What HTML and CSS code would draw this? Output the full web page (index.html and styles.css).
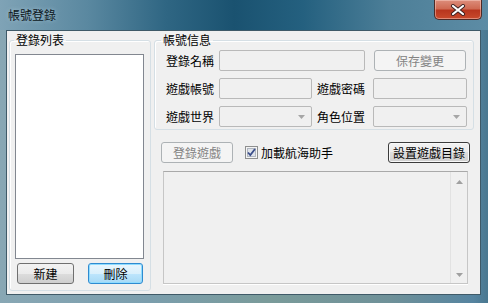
FILE: index.html
```html
<!DOCTYPE html>
<html lang="zh-Hant">
<head>
  <meta charset="UTF-8" />
  <title>帳號登錄</title>
  <link rel="stylesheet" href="styles.css">
</head>
<body>
  <div class="window">
    <div class="titlebar">
      <span class="title">帳號登錄</span>
      <div class="close">
        <svg width="16" height="12" viewBox="0 0 16 12">
          <path d="M3 2 L13 10 M13 2 L3 10" stroke="#3a2020" stroke-width="4" stroke-linecap="round"/>
          <path d="M3 2 L13 10 M13 2 L3 10" stroke="#fff" stroke-width="2.2" stroke-linecap="round"/>
        </svg>
      </div>
    </div>

    <div class="client">
      <fieldset class="group group-list">
        <legend>登錄列表</legend>
        <div class="list-body">
          <div class="listbox"></div>
          <div class="list-buttons">
            <button class="btn btn-new">新建</button>
            <button class="btn btn-hot btn-del">刪除</button>
          </div>
        </div>
      </fieldset>

      <div class="right">
        <fieldset class="group">
          <legend class="legend-info">帳號信息</legend>
          <div class="info-body">
            <div class="row">
              <span class="label">登錄名稱</span>
              <div class="field field-name"></div>
              <button class="btn btn-disabled btn-save">保存變更</button>
            </div>
            <div class="row">
              <span class="label">遊戲帳號</span>
              <div class="field field-small"></div>
              <span class="label label2">遊戲密碼</span>
              <div class="field field-small2"></div>
            </div>
            <div class="row">
              <span class="label">遊戲世界</span>
              <div class="field field-small combo">
                <svg width="7" height="4" viewBox="0 0 7 4"><path d="M0 0 H7 L3.5 4 Z" fill="#a6a6a6"/></svg>
              </div>
              <span class="label label2">角色位置</span>
              <div class="field field-small2 combo">
                <svg width="7" height="4" viewBox="0 0 7 4"><path d="M0 0 H7 L3.5 4 Z" fill="#a6a6a6"/></svg>
              </div>
            </div>
          </div>
        </fieldset>

        <div class="actions">
          <button class="btn btn-disabled btn-login">登錄遊戲</button>
          <label class="check">
            <svg width="13" height="13" viewBox="0 0 13 13">
              <rect x="0.5" y="0.5" width="12" height="12" fill="#f4f4f4" stroke="#8e8f8f"/>
              <rect x="2.5" y="2.5" width="8" height="8" fill="#dfe3ea" stroke="#b0b6c0"/>
              <path d="M3 6.5 L5.3 9 L10 3" fill="none" stroke="#3b4e8a" stroke-width="1.8"/>
            </svg>
            <span>加載航海助手</span>
          </label>
          <button class="btn btn-dark btn-dir">設置遊戲目錄</button>
        </div>

        <div class="output">
          <div class="output-text"></div>
          <div class="scrollbar">
            <svg width="7" height="4" viewBox="0 0 7 4"><path d="M0 4 H7 L3.5 0 Z" fill="#a0a0a0"/></svg>
            <svg width="7" height="4" viewBox="0 0 7 4"><path d="M0 0 H7 L3.5 4 Z" fill="#a0a0a0"/></svg>
          </div>
        </div>
      </div>
    </div>
  </div>
</body>
</html>
```

FILE: styles.css
```css
body {
  margin: 0;
  font-family: "Noto Sans CJK TC", "Noto Sans CJK SC", sans-serif;
  font-size: 12px;
  color: #000;
  background: #5d8aa0;
}
.window {
  width: 488px;
  height: 303px;
  display: flex;
  flex-direction: column;
  background: linear-gradient(90deg, #88a7b4 0%, #7b9ead 30%, #7a9b9a 55%, #6f9199 80%, #5684a0 97%, #4a7890 100%);
}
.titlebar {
  height: 30px;
  display: flex;
  align-items: flex-start;
  background: linear-gradient(90deg, #7fa3b6 0%, #5a88a0 18%, #2f6683 34%, #1a5270 48%, #24607f 62%, #4d7f98 80%, #5d8ca5 100%);
}
.title {
  margin: 8px 0 0 8px;
  line-height: 14px;
  color: #0c1620;
  text-shadow: 0 0 4px rgba(190,215,230,0.7);
}
.close {
  margin-left: auto;
  margin-right: 6px;
  width: 48px;
  height: 20px;
  box-sizing: border-box;
  border: 1px solid #4e2a26;
  border-top: none;
  border-radius: 0 0 5px 5px;
  background: linear-gradient(#dc8d7b 0%, #cf6a53 45%, #b8361e 55%, #c84a2c 100%);
  box-shadow: inset 0 0 0 1px rgba(255,220,210,0.45);
  display: flex;
  align-items: center;
  justify-content: center;
}
.client {
  margin: 0 7px 0 6px;
  height: 265px;
  box-sizing: border-box;
  border: 1px solid #3f5a68;
  background: #f0f0f0;
  display: flex;
  gap: 3px;
  padding: 2px 6px 3px 2px;
}
.group {
  margin: 0;
  padding: 0;
  min-width: 0;
  border: 1px solid #d5dfe5;
  border-radius: 3px;
  box-shadow: inset 1px 1px 0 #fff;
}
.group legend {
  padding: 0 2px;
  margin-left: 4px;
  line-height: 14px;
}
.group-list {
  width: 142px;
  box-sizing: border-box;
  flex: none;
}
.list-body {
  padding: 7px 6px 6px 5px;
}
.listbox {
  height: 205px;
  box-sizing: border-box;
  border: 1px solid #828790;
  background: #fff;
}
.list-buttons {
  display: flex;
  justify-content: space-between;
  margin-top: 4px;
  padding: 0 1px 0 2px;
}
.btn {
  height: 21px;
  box-sizing: border-box;
  padding: 0;
  border: 1px solid #707070;
  border-radius: 3px;
  background: linear-gradient(#f2f2f2 0%, #ebebeb 50%, #dddddd 50%, #cfcfcf 100%);
  font-family: inherit;
  font-size: 12px;
  line-height: 17px;
  color: #000;
}
.btn-new { width: 57px; }
.btn-del { width: 55px; }
.btn-hot {
  border-color: #2f8bd0;
  background: linear-gradient(#eaf6fd 0%, #d9f0fc 50%, #bee6fd 50%, #a7d9f5 100%);
  box-shadow: inset 0 0 0 1px #8fdcff;
}
.btn-disabled {
  border-color: #adb2b5;
  background: #f4f4f4;
  color: #838383;
}
.btn-dark {
  border-color: #3c3c3c;
  box-shadow: inset 0 0 0 1px #f8f8f8;
}
.right {
  width: 320px;
  display: flex;
  flex-direction: column;
}
.legend-info {
  margin-left: 6px !important;
}
.info-body {
  padding: 3px 0 2px 11px;
  display: flex;
  flex-direction: column;
  gap: 7px;
}
.row {
  display: flex;
  align-items: center;
  height: 21px;
}
.label {
  width: 53px;
  line-height: 14px;
}
.label2 {
  margin-left: 5px;
  width: 56px;
}
.field {
  height: 21px;
  box-sizing: border-box;
  border: 1px solid #b9b9b9;
  border-radius: 2px;
  background: #f0f0f0;
}
.field-name { width: 146px; }
.field-small { width: 93px; }
.field-small2 { width: 94px; }
.btn-save {
  width: 92px;
  margin-left: 9px;
}
.combo {
  display: flex;
  align-items: center;
  justify-content: flex-end;
  padding-right: 6px;
}
.actions {
  display: flex;
  align-items: center;
  margin-top: 12px;
  padding-left: 7px;
  height: 21px;
}
.btn-login { width: 72px; }
.check {
  display: flex;
  align-items: center;
  gap: 3px;
  margin-left: 12px;
  line-height: 14px;
}
.btn-dir {
  width: 82px;
  margin-left: auto;
  margin-right: 4px;
}
.output {
  margin: 8px 0 0 9px;
  width: 305px;
  height: 113px;
  box-sizing: border-box;
  border: 1px solid #c6c6c6;
  border-top-color: #a9a9a9;
  box-shadow: 0 1px 0 #fff;
  display: flex;
}
.output-text {
  flex: 1;
}
.scrollbar {
  width: 16px;
  border-left: 1px solid #e2e2e2;
  display: flex;
  flex-direction: column;
  justify-content: space-between;
  align-items: center;
  padding: 8px 0 6px;
}
```
